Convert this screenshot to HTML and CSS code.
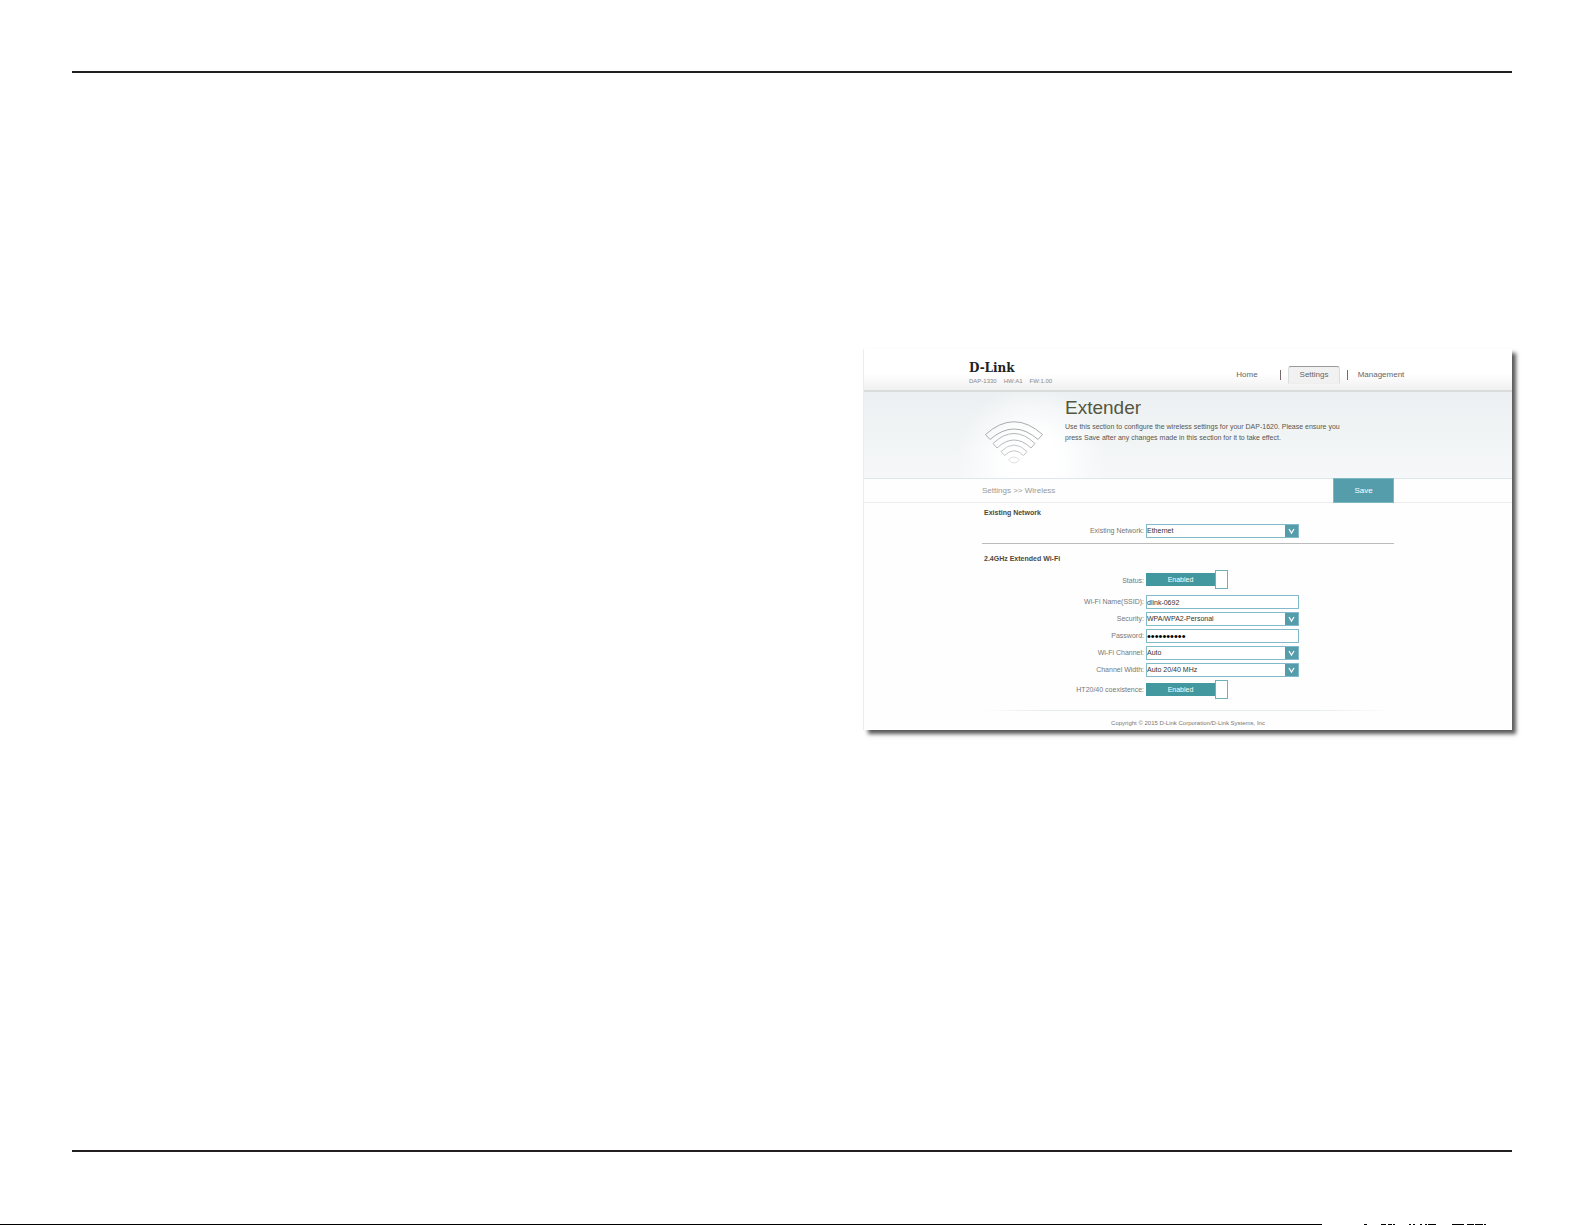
FILE: index.html
```html
<!DOCTYPE html>
<html lang="en">
<head>
<meta charset="utf-8">
<title>Extender - Wireless settings</title>
<link rel="stylesheet" href="styles.css">
</head>
<body>
<main class="sheet">
  <section class="panel">
    <header class="topbar">
      <div class="wide">
        <div class="brand">
          <div class="logo">D-Link</div>
          <div class="versions"><span>DAP-1330</span><span>HW:A1</span><span>FW:1.00</span></div>
        </div>
        <nav class="nav">
          <a href="#">Home</a>
          <a href="#" class="active">Settings</a>
          <a href="#">Management</a>
        </nav>
      </div>
    </header>
    <div class="hero">
      <div class="content hero-inner">
        <svg class="wifi" width="60" height="44" viewBox="0 0 60 44" fill="none" stroke-linejoin="round">
          <path stroke="#a9acae" d="M1.500 14.500Q30 -11 58.500 14.500L54 19.500Q30 -1.500 6 19.500Z"/>
          <path stroke="#b4b7b9" d="M9 23.500Q30 3.500 51 23.500L47 28Q30 12 13 28Z"/>
          <path stroke="#c4c7c9" d="M17 31.500Q30 18.500 43 31.500L39.500 35.500Q30 26 20.500 35.500Z"/>
          <path stroke="#dfe1e2" d="M24.500 39.500Q30 34.500 35.500 39.500L32 43Q30 42 28 43Z"/>
        </svg>
        <div>
          <h1>Extender</h1>
          <p>Use this section to configure the wireless settings for your DAP-1620. Please ensure you<br>press Save after any changes made in this section for it to take effect.</p>
        </div>
      </div>
    </div>
    <form>
      <div class="crumbbar">
        <div class="content crumbs">
          <span>Settings &gt;&gt; Wireless</span>
          <button type="button" class="save">Save</button>
        </div>
      </div>
      <div class="content">
        <h2>Existing Network</h2>
        <div class="fields">
          <label for="net">Existing Network:</label>
          <select id="net"><option>Ethernet</option></select>
        </div>
        <hr>
        <h2>2.4GHz Extended Wi-Fi</h2>
        <div class="fields">
          <label for="status">Status:</label>
          <span class="toggle first"><input type="checkbox" id="status" checked><span class="track">Enabled</span><span class="knob"></span></span>
          <label for="ssid">Wi-Fi Name(SSID):</label>
          <input class="box" type="text" id="ssid" value="dlink-0692">
          <label for="sec">Security:</label>
          <select id="sec"><option>WPA/WPA2-Personal</option></select>
          <label for="pass">Password:</label>
          <input class="box" type="password" id="pass" value="0123456789">
          <label for="chan">Wi-Fi Channel:</label>
          <select id="chan"><option>Auto</option></select>
          <label for="width">Channel Width:</label>
          <select id="width"><option>Auto 20/40 MHz</option></select>
          <label for="ht">HT20/40 coexistence:</label>
          <span class="toggle"><input type="checkbox" id="ht" checked><span class="track">Enabled</span><span class="knob"></span></span>
        </div>
      </div>
    </form>
    <footer class="content copyright">Copyright © 2015 D-Link Corporation/D-Link Systems, Inc</footer>
  </section>
</main>
<svg class="edge" aria-hidden="true"><path fill="#000" d="M0 0h1322v1H0zM1364 0h3v1h-3zM1381 0h5v1h-5zM1388 0h4v1h-4zM1393 0h2v1h-2zM1409 0h2v1h-2zM1413 0h2v1h-2zM1420 0h2v1h-2zM1425 0h2v1h-2zM1428 0h8v1h-8zM1452 0h12v1h-12zM1467 0h7v1h-7zM1475 0h8v1h-8zM1484 0h2v1h-2z"/></svg>
</body>
</html>
```
FILE: styles.css
```css
* { box-sizing: border-box; }

body {
  margin: 0;
  min-height: 100vh;
  display: flex;
  flex-direction: column;
  background: #fff;
  color: #5a564e;
  font: 7px/11px "Liberation Sans", Arial, sans-serif;
}

.sheet {
  flex: 1;
  margin: 71px 73px 72px 72px;
  border-top: 2px solid #231f20;
  border-bottom: 2px solid #231f20;
  padding-top: 276px;
}

.panel {
  width: 45%;
  min-width: 440px;
  margin-left: auto;
  background: #fefefe;
  box-shadow: 4px 4px 4px #5a5859, -1px 0 0 #eee;
}

.content { width: 412px; margin: 0 auto; }

.topbar {
  height: 43px;
  background: linear-gradient(#fff 60%, #f0f0f0);
  border-bottom: 2px solid #d9dcdc;
}

.wide {
  width: 438px;
  height: 41px;
  margin: 0 auto;
  display: flex;
  justify-content: space-between;
}

.brand { padding-top: 12px; }

.logo {
  font: bold 12px/14px "DejaVu Serif", serif;
  color: #222;
}

.versions {
  display: flex;
  gap: 7px;
  font-size: 6px;
  line-height: 12px;
  color: #888;
}

.nav {
  display: flex;
  padding-top: 17px;
  font-size: 8px;
}

.nav a {
  width: 52px;
  height: 18px;
  border: 1px solid transparent;
  line-height: 16px;
  text-align: center;
  color: #666;
  text-decoration: none;
}

.nav a + a {
  margin-left: 15px;
  position: relative;
}

.nav a + a::before {
  content: "";
  position: absolute;
  left: -9px;
  top: 3px;
  width: 1px;
  height: 10px;
  background: #776a68;
}

.nav .active {
  background: #f1f1f1;
  border-color: #999 #ddd #eee;
  border-radius: 3px 3px 0 0;
}

.hero {
  height: 87px;
  background:
    radial-gradient(circle at calc(50% - 156px) 68px, #fff 25px, transparent 75px),
    linear-gradient(#ecf0f2, #f1f4f5 50%, #f5f7f9);
  border-bottom: 1px solid #dde6e8;
}

.hero-inner {
  height: 86px;
  padding: 4px 0 0 2px;
  display: flex;
  gap: 21px;
}

.wifi { flex: none; margin-top: 24px; }

h1 {
  margin: 0;
  font-size: 19px;
  font-weight: normal;
  line-height: 24px;
  color: #555640;
}

.hero p { margin: 1px 0 0; white-space: nowrap; }

.crumbbar { border-bottom: 1px solid #eee; }

.crumbs {
  height: 23px;
  display: flex;
  align-items: center;
  justify-content: space-between;
  font-size: 8px;
  color: #999;
}

.save {
  width: 61px;
  height: 25px;
  border: 1px solid #7ab8c2;
  padding: 0;
  background: #559dab;
  color: #fff;
  font: 8px/11px "Liberation Sans", Arial, sans-serif;
}

h2 {
  margin: 0;
  padding: 4px 2px 6px;
  font-size: 7px;
  line-height: 11px;
  color: #4c4a3c;
}

.fields {
  display: grid;
  grid-template-columns: 162px 153px;
  gap: 3px 2px;
  align-items: center;
}

.fields label {
  text-align: right;
  line-height: 14px;
  color: #777;
}

.box, select {
  display: block;
  width: 153px;
  height: 14px;
  margin: 0;
  padding: 0;
  border: 1px solid #83bac9;
  border-radius: 0;
  background: #fff;
  color: #333;
  font: 7px/12px "Liberation Sans", Arial, sans-serif;
}

#pass { font-size: 11px; color: #000; }

select {
  appearance: none;
  background: #fff url("data:image/svg+xml,%3Csvg xmlns='http://www.w3.org/2000/svg' width='13' height='14'%3E%3Cpath fill='%23559dab' d='M0 0h13v14H0z'/%3E%3Cpath d='M4 5l2.500 4L9 5' fill='none' stroke='%23fff' stroke-width='1.200'/%3E%3C/svg%3E") right center no-repeat;
}

hr {
  margin: 5px 0;
  border: 0;
  border-top: 1px solid #bbb;
}

.toggle {
  position: relative;
  display: flex;
  align-items: center;
  width: 82px;
  height: 19px;
}

.first { margin-bottom: 3px; }

.toggle input {
  position: absolute;
  inset: 0;
  width: 100%;
  height: 100%;
  margin: 0;
  opacity: 0;
}

.track {
  flex: 1;
  height: 13px;
  background: #43979e;
  color: #fff;
  line-height: 13px;
  text-align: center;
}

.knob {
  width: 13px;
  height: 19px;
  border: 1px solid #6fb0ba;
  background: #fff;
}

.copyright {
  margin-top: 11px;
  padding: 8px 0 1px;
  text-align: center;
  font-size: 6px;
  color: #777;
  background: linear-gradient(90deg, transparent, #e6ebec 15%, #e6ebec 80%, transparent) top / 100% 1px no-repeat;
}

.edge { display: block; width: 100%; height: 1px; }
```
